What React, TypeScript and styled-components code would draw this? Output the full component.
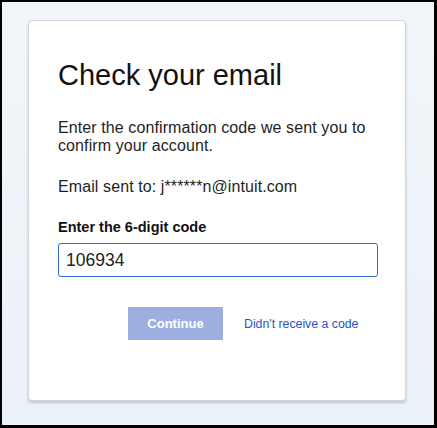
import styled, { createGlobalStyle } from 'styled-components';

const GlobalStyle = createGlobalStyle`
    html, body {
        margin: 0;
        padding: 0;
    }
    body {
        font-family: "Liberation Sans", Arial, sans-serif;
        color: #1a1a1a;
    }
`;

const Frame = styled.div`
    box-sizing: border-box;
    width: 437px;
    height: 428px;
    border-style: solid;
    border-color: #000;
    border-width: 2px 3px 3px 2px;
    padding: 18px 0 0 26px;
    background: linear-gradient(180deg, #f2f6fa 0%, #ebf1f8 100%);
`;

const Card = styled.div`
    box-sizing: border-box;
    width: 378px;
    height: 381px;
    background: #fff;
    border: 1px solid #d3d6db;
    border-radius: 4px;
    box-shadow: 0 2px 3px rgba(0, 0, 0, 0.18);
    padding: 37px 27px 0 29px;
`;

const Title = styled.h1`
    margin: 0;
    font-size: 29px;
    line-height: 34px;
    font-weight: 400;
    color: #111;
`;

const Text = styled.p<{ gap: number }>`
    margin: ${({ gap }) => gap}px 0 0;
    font-size: 16px;
    line-height: 18px;
    letter-spacing: 0.1px;
    color: #1e1e1e;
`;

const Label = styled.label`
    display: block;
    margin-top: 23px;
    font-size: 14.5px;
    line-height: 17px;
    font-weight: 700;
    color: #111;
`;

const CodeInput = styled.input`
    box-sizing: border-box;
    display: block;
    width: 320px;
    height: 34px;
    margin-top: 7px;
    padding: 0 7px;
    border: 1px solid #2f6dd5;
    border-radius: 3px;
    font-family: "Liberation Sans", Arial, sans-serif;
    font-size: 17.5px;
    color: #222;
    outline: none;
`;

const Actions = styled.div`
    display: flex;
    align-items: center;
    gap: 21px;
    margin-top: 30px;
    padding-left: 70px;
`;

const Button = styled.button`
    width: 95px;
    height: 33px;
    border: none;
    border-radius: 1px;
    background: #9dafe1;
    color: #fff;
    font-family: "Liberation Sans", Arial, sans-serif;
    font-size: 13px;
    font-weight: 700;
    cursor: default;
`;

const Link = styled.a`
    font-size: 12.3px;
    color: #1f55c6;
    text-decoration: none;
`;

const App = () => (
    <>
        <GlobalStyle />
        <Frame>
            <Card>
                <Title>Check your email</Title>
                <Text gap={27}>Enter the confirmation code we sent you to confirm your account.</Text>
                <Text gap={23}>Email sent to: j******n@intuit.com</Text>
                <Label htmlFor="code">Enter the 6-digit code</Label>
                <CodeInput id="code" defaultValue="106934" />
                <Actions>
                    <Button disabled>Continue</Button>
                    <Link href="#">Didn't receive a code</Link>
                </Actions>
            </Card>
        </Frame>
    </>
);

export default App;
